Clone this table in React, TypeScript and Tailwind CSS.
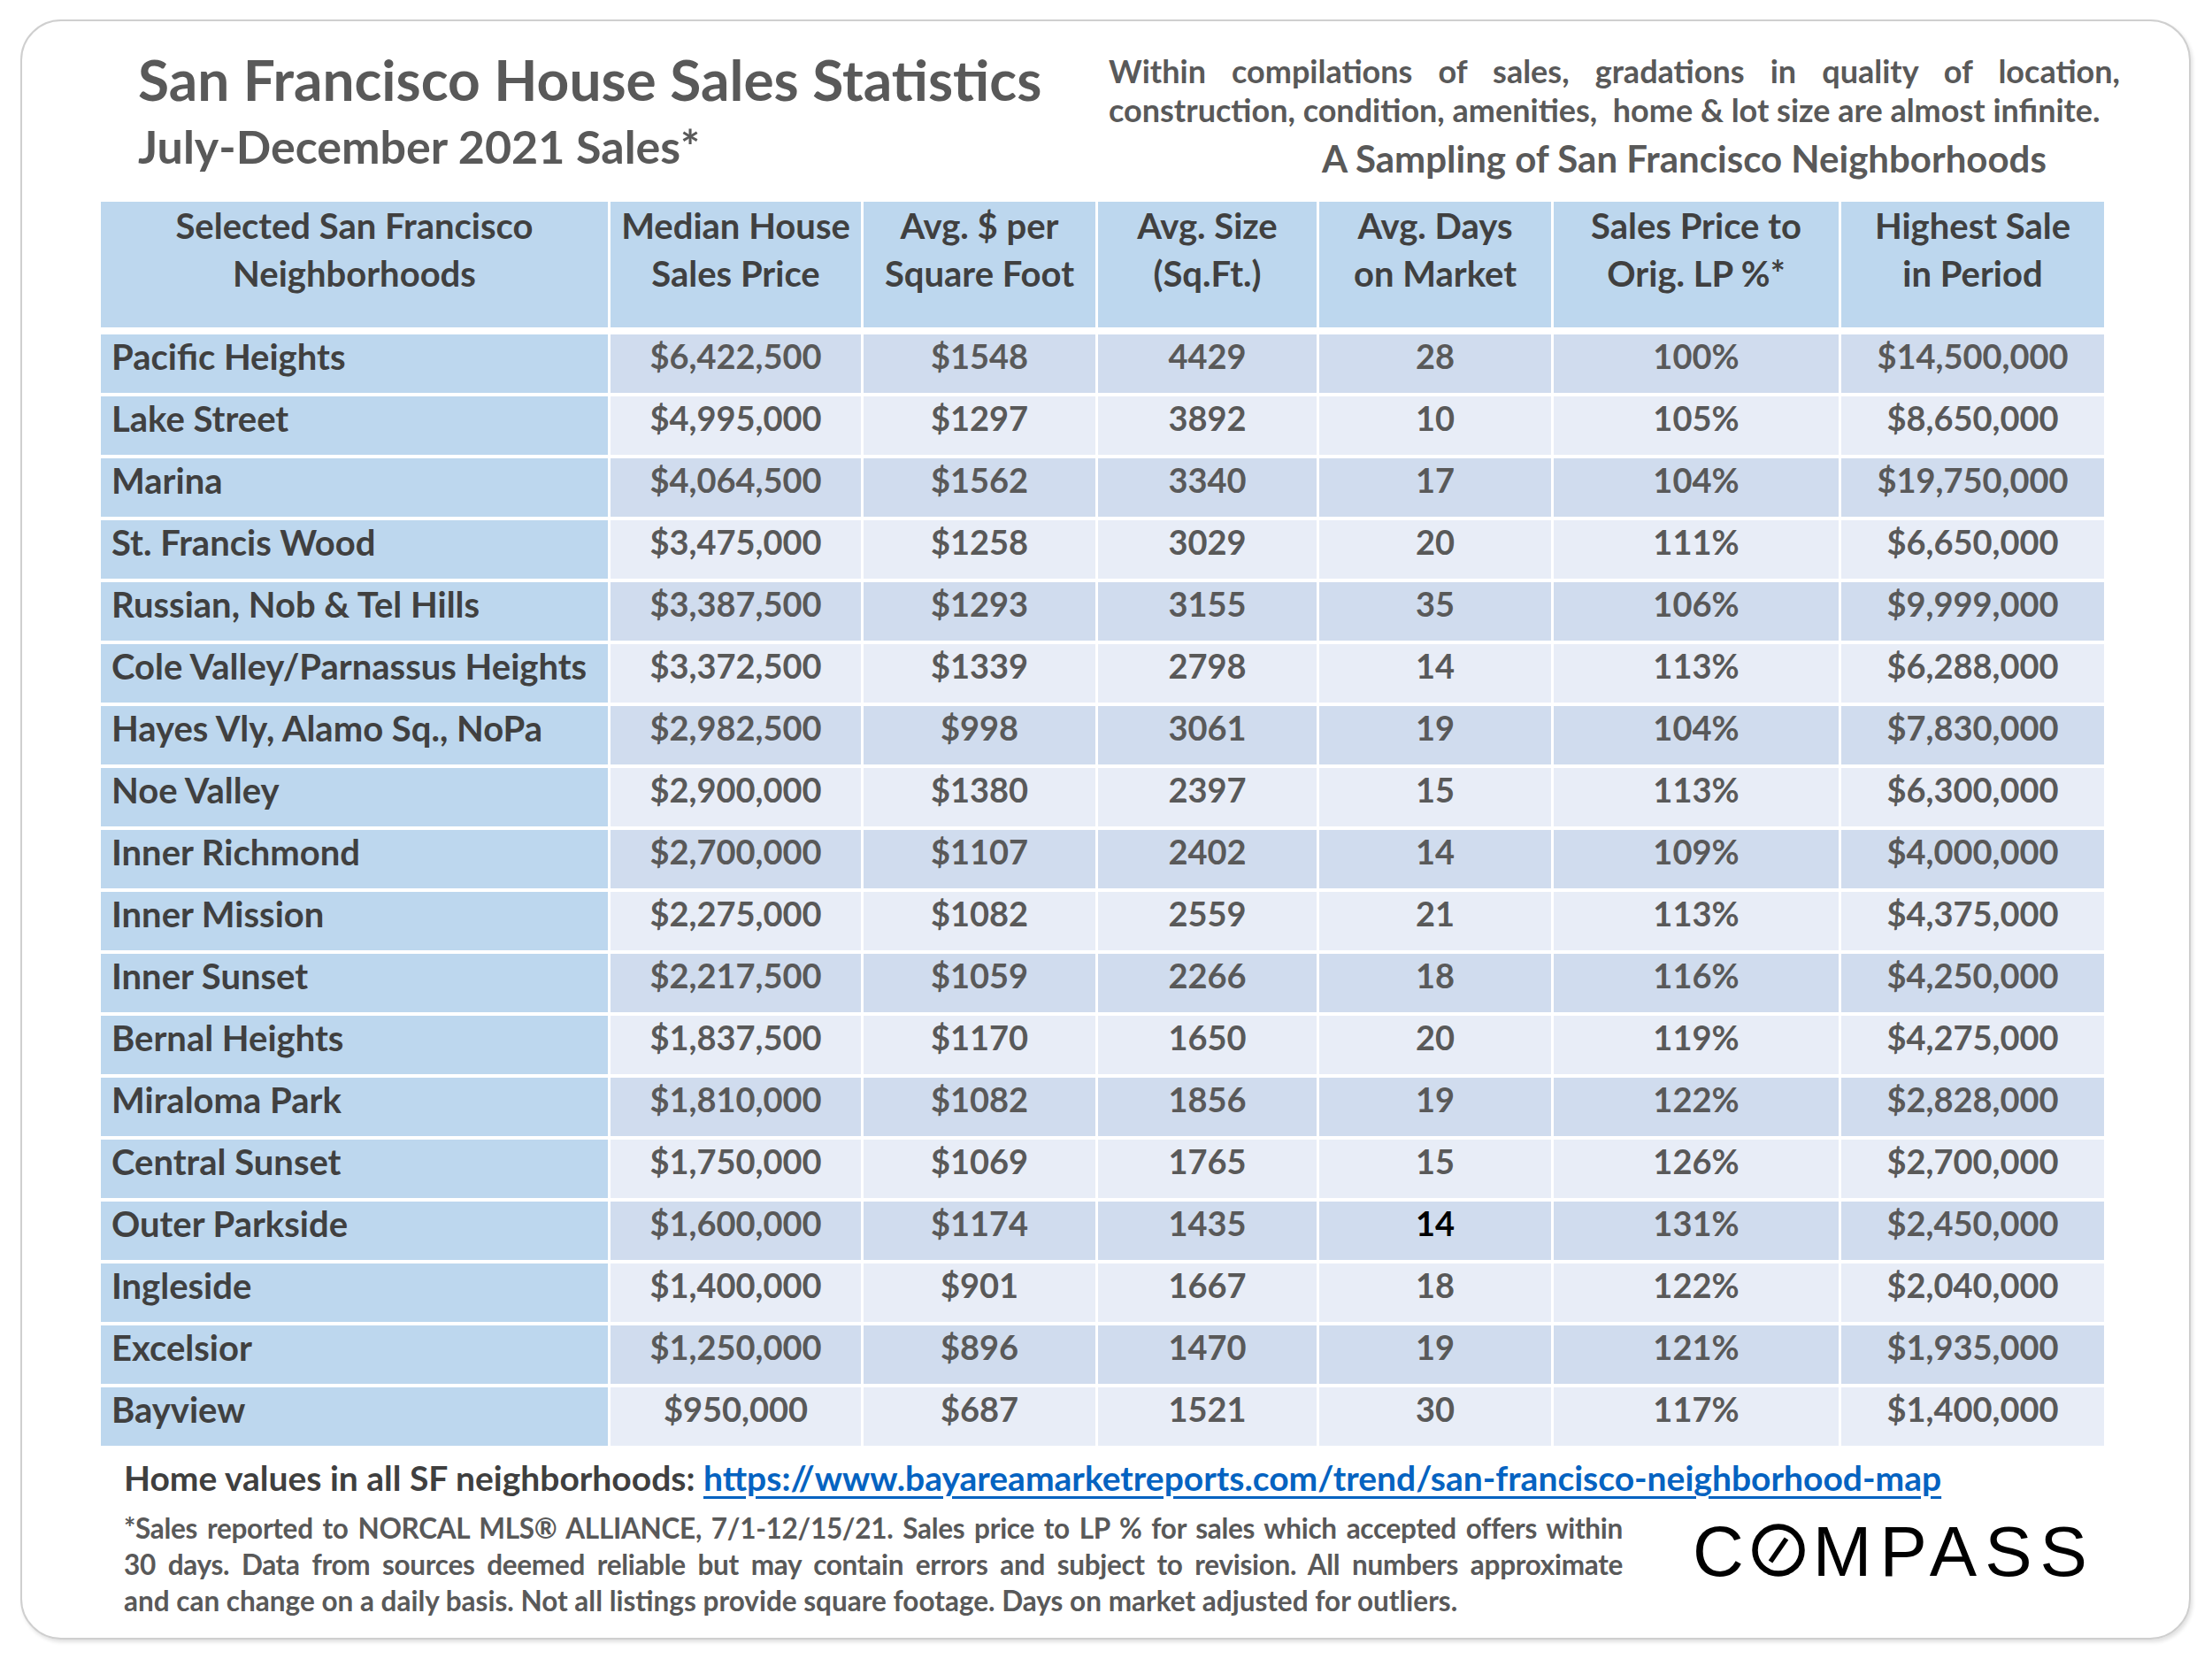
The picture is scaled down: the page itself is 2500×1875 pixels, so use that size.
const headers = [
  ["Selected San Francisco", "Neighborhoods"],
  ["Median House", "Sales Price"],
  ["Avg. $ per", "Square Foot"],
  ["Avg. Size", "(Sq.Ft.)"],
  ["Avg. Days", "on Market"],
  ["Sales Price to", "Orig. LP %*"],
  ["Highest Sale", "in Period"],
];

const rows = [
  ["Pacific Heights", "$6,422,500", "$1548", "4429", "28", "100%", "$14,500,000"],
  ["Lake Street", "$4,995,000", "$1297", "3892", "10", "105%", "$8,650,000"],
  ["Marina", "$4,064,500", "$1562", "3340", "17", "104%", "$19,750,000"],
  ["St. Francis Wood", "$3,475,000", "$1258", "3029", "20", "111%", "$6,650,000"],
  ["Russian, Nob & Tel Hills", "$3,387,500", "$1293", "3155", "35", "106%", "$9,999,000"],
  ["Cole Valley/Parnassus Heights", "$3,372,500", "$1339", "2798", "14", "113%", "$6,288,000"],
  ["Hayes Vly, Alamo Sq., NoPa", "$2,982,500", "$998", "3061", "19", "104%", "$7,830,000"],
  ["Noe Valley", "$2,900,000", "$1380", "2397", "15", "113%", "$6,300,000"],
  ["Inner Richmond", "$2,700,000", "$1107", "2402", "14", "109%", "$4,000,000"],
  ["Inner Mission", "$2,275,000", "$1082", "2559", "21", "113%", "$4,375,000"],
  ["Inner Sunset", "$2,217,500", "$1059", "2266", "18", "116%", "$4,250,000"],
  ["Bernal Heights", "$1,837,500", "$1170", "1650", "20", "119%", "$4,275,000"],
  ["Miraloma Park", "$1,810,000", "$1082", "1856", "19", "122%", "$2,828,000"],
  ["Central Sunset", "$1,750,000", "$1069", "1765", "15", "126%", "$2,700,000"],
  ["Outer Parkside", "$1,600,000", "$1174", "1435", "14", "131%", "$2,450,000"],
  ["Ingleside", "$1,400,000", "$901", "1667", "18", "122%", "$2,040,000"],
  ["Excelsior", "$1,250,000", "$896", "1470", "19", "121%", "$1,935,000"],
  ["Bayview", "$950,000", "$687", "1521", "30", "117%", "$1,400,000"],
];

const cols = "grid grid-cols-[573px_283px_262px_247px_262px_322px_297px] gap-x-[3px]";

const CompassLogo = () => (
  <div className="flex items-start text-[80px] leading-[80px] text-black font-normal font-['Liberation_Sans',Arial,sans-serif] tracking-[9px]">
    <span>C</span>
    <svg width="60" height="60" viewBox="0 0 60 60" className="mt-[8px] mr-[9px]">
      <circle cx="30" cy="30" r="26.5" fill="none" stroke="#000" strokeWidth="6.5" />
      <line x1="21" y1="43" x2="39" y2="17" stroke="#000" strokeWidth="5.5" />
    </svg>
    <span>MPASS</span>
  </div>
);

const App = () => {
  return (
    <div className="w-[2500px] h-[1875px] bg-white pl-[23px] pt-[22px] font-['Lato',sans-serif] font-bold">
      <div className="w-[2453px] h-[1831px] rounded-[46px] border-2 border-[#cfcfcf] shadow-[2px_3px_4px_rgba(0,0,0,0.12)] pl-[89px]">
        {/* top */}
        <div className="flex w-[2282px] h-[204px] pt-[34px]">
          <div className="flex-1 ml-[42px] text-[#595959]">
            <h1 className="text-[64px] leading-[64px]">San Francisco House Sales Statistics</h1>
            <h2 className="text-[52px] leading-[86px]">July-December 2021 Sales*</h2>
          </div>
          <div className="w-[1143px] text-[#595959]">
            <p className="text-[36px] leading-[44px] text-justify [text-align-last:justify]">
              Within compilations of sales, gradations in quality of location,
            </p>
            <p className="text-[36px] leading-[44px] whitespace-pre">
              construction, condition, amenities,  home &amp; lot size are almost infinite.
            </p>
            <p className="text-[42px] leading-[52px] mt-[7px] pl-[241px]">A Sampling of San Francisco Neighborhoods</p>
          </div>
        </div>

        {/* table */}
        <div className="flex flex-col gap-[4px] w-[2264px]">
          <div className={`${cols} h-[142px] mb-[4px]`}>
            {headers.map((h, i) => (
              <div key={i} className="bg-[#bdd7ee] text-center text-[40px] leading-[54px] text-[#404040]">
                <div>{h[0]}</div>
                <div>{h[1]}</div>
              </div>
            ))}
          </div>
          {rows.map((r, ri) => (
            <div key={ri} className={`${cols} h-[66px]`}>
              {r.map((c, ci) => {
                if (ci === 0) {
                  return (
                    <div key={ci} className="bg-[#bdd7ee] pl-[12px] text-[40px] leading-[51px] text-[#404040]">
                      {c}
                    </div>
                  );
                }
                const dark = ri === 14 && ci === 4;
                return (
                  <div
                    key={ci}
                    className={`${ri % 2 === 0 ? "bg-[#d0dcee]" : "bg-[#e8edf7]"} text-center text-[38px] leading-[49px] ${dark ? "text-black" : "text-[#595959]"}`}
                  >
                    {c}
                  </div>
                );
              })}
            </div>
          ))}
        </div>

        {/* footer */}
        <div className="pl-[26px] mt-[12px]">
          <div className="text-[39px] leading-[48px] text-[#3f3f3f]">
            Home values in all SF neighborhoods:{" "}
            <a href="#" className="text-[#0563c1] underline underline-offset-[6px] decoration-[3px]">
              https://www.bayareamarketreports.com/trend/san-francisco-neighborhood-map
            </a>
          </div>
          <div className="flex items-start mt-[13px]">
            <div className="w-[1694px] text-[31.5px] leading-[41px] text-[#595959]">
              <p className="text-justify [text-align-last:justify] tracking-[-0.3px] [word-spacing:-3px]">
                *Sales reported to NORCAL MLS® ALLIANCE, 7/1-12/15/21. Sales price to LP % for sales which accepted offers within
              </p>
              <p className="text-justify [text-align-last:justify] tracking-[-0.3px] [word-spacing:-3px]">
                30 days. Data from sources deemed reliable but may contain errors and subject to revision. All numbers approximate
              </p>
              <p>and can change on a daily basis. Not all listings provide square footage. Days on market adjusted for outliers.</p>
            </div>
            <div className="ml-[79px] mt-[7px]">
              <CompassLogo />
            </div>
          </div>
        </div>
      </div>
    </div>
  );
};

export default App;
